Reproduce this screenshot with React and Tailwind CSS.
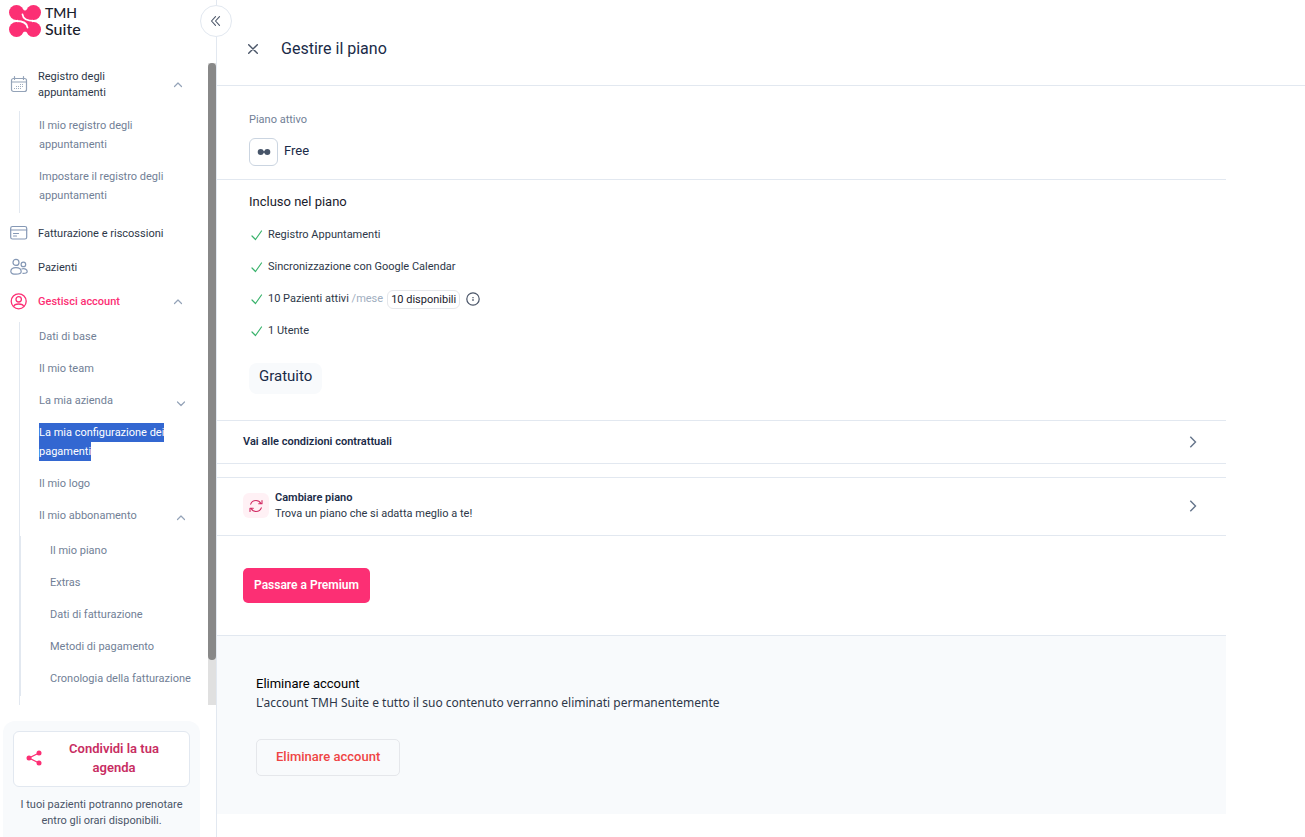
import React, { useState } from "react";

const billingItems = [
  "Il mio piano",
  "Extras",
  "Dati di fatturazione",
  "Metodi di pagamento",
  "Cronologia della fatturazione",
];

const Chevron = ({ className, d = "M1.500 5.500 5 2 8.500 5.500" }) => (
  <svg
    viewBox="0 0 10 7"
    className={`w-[10px] h-[7px] shrink-0 ${className}`}
    fill="none"
    stroke="currentColor"
    strokeWidth="1.2"
    strokeLinecap="round"
    strokeLinejoin="round">
    <path d={d} />
  </svg>
);

const Logo = () => (
  <svg viewBox="0 0 32 32" className="w-8 h-8 shrink-0" fill="#fc2f74">
    <circle cx="7.5" cy="7.5" r="7.5" />
    <circle cx="24.5" cy="7.5" r="7.5" />
    <circle cx="7.5" cy="24.5" r="7.5" />
    <circle cx="24.5" cy="24.5" r="7.5" />
    <path d="M12 3.500C14 6 18 6 20 3.500L26 13C24 16 24 16 26 19L20 28.500C18 26 14 26 12 28.500L6 19C8 16 8 16 6 13Z" />
    <path
      d="M13.500 9.500C14 13.500 18 16 25 16M7 16C14 16 18 18 18.500 22.500"
      fill="none"
      stroke="#fff"
      strokeWidth="1.800"
      strokeLinecap="round"
    />
    <path d="M0 14.800Q5 16 9 14.800V17.200Q5 16 0 17.200ZM32 14.800Q27 16 23 14.800V17.200Q27 16 32 17.200Z" fill="#fff" />
  </svg>
);

const CalendarIcon = () => (
  <svg
    viewBox="0 0 18 18"
    className="w-[18px] h-[18px] shrink-0 text-[#94a3b8]"
    fill="none"
    stroke="currentColor"
    strokeWidth="1.200"
    strokeLinecap="round">
    <rect x="1.500" y="3.500" width="15" height="13" rx="2" />
    <path d="M1.500 7h15M4.500 1.500v3M13.500 1.500v3" />
    <path
      d="M4.500 13.500h.1M6.500 13.500h.1M8.500 13.500h.1M10.500 13.500h.1M6.500 11.500h.1M8.500 11.500h.1M10.500 11.500h.1M12.500 11.500h.1M10.500 9.500h.1M12.500 9.500h.1"
      strokeWidth="1"
    />
  </svg>
);

const CardIcon = () => (
  <svg
    viewBox="0 0 18 18"
    className="w-[18px] h-[18px] shrink-0 text-[#8598b5]"
    fill="none"
    stroke="currentColor"
    strokeWidth="1.200"
    strokeLinecap="round">
    <rect x=".7" y="2.500" width="16" height="12.500" rx="1.800" />
    <path d="M.7 6h16M3.500 9.500h5M3.500 12h3" />
  </svg>
);

const PatientsIcon = () => (
  <svg
    viewBox="0 0 18 18"
    className="w-[18px] h-[18px] shrink-0 text-[#8598b5]"
    fill="none"
    stroke="currentColor"
    strokeWidth="1.200">
    <circle cx="6" cy="4.400" r="3" />
    <path d="M.8 13.600c0-2.600 2.200-4 5.200-4s5.200 1.400 5.200 4c0 1.900-2 2.600-5.200 2.600S.8 15.500.8 13.600Z" />
    <circle cx="13.400" cy="6.400" r="2.300" />
    <path d="M11.500 11c3.200-1 5.700.4 5.700 2.500 0 1.300-1.500 2-4.700 1.900" />
  </svg>
);

const AccountIcon = () => (
  <svg
    viewBox="0 0 18 18"
    className="w-[18px] h-[18px] shrink-0 text-[#fc2f74]"
    fill="none"
    stroke="currentColor"
    strokeWidth="1.300">
    <circle cx="8.700" cy="9.300" r="7.500" />
    <circle cx="8.700" cy="7.300" r="2.700" />
    <path d="M3.700 14.700c.4-2 2.500-2.700 5-2.700s4.600.7 5 2.700" />
  </svg>
);

const ShareIcon = () => (
  <svg viewBox="0 0 16 16" className="w-4 h-4 shrink-0" fill="#fc2f74">
    <path d="M13 3 3 8l10 5" fill="none" stroke="#fc2f74" strokeWidth="1.300" />
    <circle cx="3" cy="8" r="2.500" />
    <circle cx="13" cy="3" r="2.500" />
    <circle cx="13" cy="13" r="2.500" />
  </svg>
);

const RefreshIcon = () => (
  <svg
    viewBox="0 0 14 14"
    className="w-[14px] h-[14px] text-[#d12a63]"
    fill="none"
    stroke="currentColor"
    strokeWidth="1.100"
    strokeLinecap="round"
    strokeLinejoin="round">
    <path d="M1.700 5.200C2.500 2.800 4.600 1.500 7 1.500c2.100 0 3.900 1.100 4.900 2.900M13 1.500v3.300H9.700" />
    <path d="M12.300 8.800c-.8 2.400-2.900 3.700-5.300 3.700-2.100 0-3.900-1.100-4.900-2.900M1 12.500V9.200h3.300" />
  </svg>
);

const CheckIcon = () => (
  <svg
    viewBox="0 0 12 12"
    className="w-3 h-3 shrink-0 text-[#38b26b]"
    fill="none"
    stroke="currentColor"
    strokeWidth="1.200"
    strokeLinecap="round"
    strokeLinejoin="round">
    <path d="m1 7 3.500 3.500L10.500 2" />
  </svg>
);

const SubLink = ({ children }) => (
  <a href="#" className="block w-[136px] text-[11px] leading-[19px] text-[#718096]">
    {children}
  </a>
);

// Voce di primo livello del menu laterale
const NavRow = ({ icon, label, active, chevron }) => (
  <a href="#" className="flex items-center min-h-[34px] pl-[10px] pr-[25px]">
    {icon}
    <span
      className={`ml-[10px] pt-0.5 w-32 text-[11px] leading-4 ${
        active ? "text-[#fc2f74] font-medium" : "text-[#2d3748]"
      }`}>
      {label}
    </span>
    {chevron && <Chevron className="ml-auto text-[#94a3b8]" />}
  </a>
);

const Feature = ({ children }) => (
  <li className="flex items-center h-8 pl-[2px] text-[11px] text-[#2d3748]">
    <CheckIcon />
    <span className="ml-[5px]">{children}</span>
  </li>
);

const Sidebar = ({ onToggle }) => {
  return (
    <aside className="relative flex flex-col w-[217px] shrink-0 h-screen border-r border-[#e2e8f0]">
      <div className="flex h-[63px] shrink-0 pt-[5px] pl-[9px]">
        <Logo />
        <div className="ml-1 font-['Lato'] font-medium text-[#1a202c] leading-4">
          <div className="text-sm leading-4">TMH</div>
          <div className="text-base leading-4">Suite</div>
        </div>
      </div>

      <button
        type="button"
        aria-label="Comprimi menu"
        onClick={onToggle}
        className="absolute top-[5px] -right-4 w-8 h-8 flex items-center justify-center rounded-full border border-[#e2e8f0] bg-white text-[#4a5568]">
        <svg
          viewBox="0 0 10 10"
          className="w-[10px] h-[10px]"
          fill="none"
          stroke="currentColor"
          strokeWidth="1.100"
          strokeLinecap="round"
          strokeLinejoin="round">
          <path d="M4.500.7.500 5l4 4.300M8.500.7 4.500 5l4 4.300" />
        </svg>
      </button>

      <div className="flex flex-1 min-h-0">
        <nav className="flex-1 min-w-0 overflow-hidden pt-1">
          <NavRow icon={<CalendarIcon />} label="Registro degli appuntamenti" chevron />
          <div className="ml-[19px] mt-[10px] border-l border-[#e2e8f0] pl-[19px] pt-[5px] pb-2 flex flex-col gap-[13px]">
            <SubLink>Il mio registro degli appuntamenti</SubLink>
            <SubLink>Impostare il registro degli appuntamenti</SubLink>
          </div>

          <div className="mt-[3px]">
            <NavRow icon={<CardIcon />} label="Fatturazione e riscossioni" />
            <NavRow icon={<PatientsIcon />} label="Pazienti" />
            <NavRow icon={<AccountIcon />} label="Gestisci account" active chevron />
          </div>
          <div className="ml-[19px] mt-1 border-l border-[#e2e8f0] pt-[5px] pb-5">
            <div className="pl-[19px] flex flex-col gap-[13px]">
              <SubLink>Dati di base</SubLink>
              <SubLink>Il mio team</SubLink>
              <div className="flex items-center justify-between pr-[22px]">
                <SubLink>La mia azienda</SubLink>
                <Chevron className="mt-[6px] text-[#94a3b8]" d="M1.500 2 5 5.500 8.500 2" />
              </div>
              <a href="#" className="block w-[136px] text-[11px] leading-[19px] text-white">
                <span className="bg-[#3367d1] py-[3px]">
                  La mia configurazione dei pagamenti
                </span>
              </a>
              <SubLink>Il mio logo</SubLink>
              <div className="flex items-center justify-between pr-[22px]">
                <SubLink>Il mio abbonamento</SubLink>
                <Chevron className="mt-1 text-[#94a3b8]" />
              </div>
            </div>
            <div className="mt-[11px] border-l border-[#e2e8f0] pl-[29px] pt-[5px] pb-2 flex flex-col gap-[13px]">
              {billingItems.map((item) => (
                <a
                  key={item}
                  href="#"
                  className="text-[11px] leading-[19px] text-[#718096] whitespace-nowrap">
                  {item}
                </a>
              ))}
            </div>
          </div>
        </nav>
        <div className="w-2 bg-[#e0e0e0]">
          <div className="h-[93%] rounded-full bg-[#888888]"></div>
        </div>
      </div>

      <div className="shrink-0 mt-4 ml-[3px] mr-4 rounded-t-xl bg-[#f8fafc] px-[10px] pt-[10px] pb-2">
        <button
          type="button"
          className="flex items-center w-full h-14 pl-3 pb-0.5 rounded-md border border-[#e2e8f0] bg-white">
          <ShareIcon />
          <span className="w-[100px] ml-[22px] text-[13px] leading-[19px] font-semibold text-[#c82d62]">
            Condividi la tua agenda
          </span>
        </button>
        <p className="mt-[10px] text-center text-[11px] leading-4 text-[#4a5568]">
          I tuoi pazienti potranno prenotare entro gli orari disponibili.
        </p>
      </div>
    </aside>
  );
};

const App = () => {
  const [open, setOpen] = useState(true);

  return (
    <div className="flex min-h-screen bg-white font-['Roboto',sans-serif]">
      {open && <Sidebar onToggle={() => setOpen(false)} />}

      <main className="flex-1 min-w-0">
        <header className="flex items-center h-[86px] pt-3 pl-[31px] border-b border-[#e2e8f0]">
          <button type="button" aria-label="Chiudi" className="text-[#4a5568]">
            <svg
              viewBox="0 0 10 10"
              className="w-[10px] h-[10px]"
              stroke="currentColor"
              strokeWidth="1.400"
              strokeLinecap="round">
              <path d="m.700.700 8.600 8.600M9.300.700.700 9.300" />
            </svg>
          </button>
          <h1 className="ml-[23px] text-base leading-5 text-[#1a2b48]">Gestire il piano</h1>
        </header>

        <div className="pr-[79px]">
          <section className="pl-8 pt-6 pb-[13px] border-b border-[#e2e8f0]">
            <p className="text-[11px] leading-5 text-[#718096]">Piano attivo</p>
            <div className="flex items-center mt-2">
              <div className="flex items-center justify-center w-[29px] h-7 rounded-md border border-[#cbd5e1]">
                <svg viewBox="0 0 14 8" className="w-[14px] h-2" fill="#475569">
                  <circle cx="3.700" cy="4" r="3" />
                  <circle cx="10.300" cy="4" r="3" />
                  <rect x="3" y="3.200" width="8" height="1.600" />
                </svg>
              </div>
              <span className="ml-[6px] pb-0.5 text-[13px] leading-5 text-[#1a2b48]">Free</span>
            </div>
          </section>

          <section className="pl-8 pt-3 pb-[26px]">
            <h2 className="text-[13px] leading-5 text-[#1a202c]">Incluso nel piano</h2>
            <ul className="mt-[7px]">
              <Feature>Registro Appuntamenti</Feature>
              <Feature>Sincronizzazione con Google Calendar</Feature>
              <Feature>
                <span className="flex items-center">
                  10 Pazienti attivi&nbsp;<span className="text-[#a0aec0]">/mese</span>
                  <span className="ml-1 px-[3px] h-[19px] leading-[17px] rounded-md border border-[#e5e7eb] text-[#1a202c]">
                    10 disponibili
                  </span>
                  <svg
                    viewBox="0 0 14 14"
                    className="ml-[6px] w-[14px] h-[14px]"
                    fill="none"
                    stroke="#4a5568"
                    strokeWidth="1.200">
                    <circle cx="7" cy="7" r="6.200" />
                    <path d="M7 6.700v2.300M7 5v1" />
                  </svg>
                </span>
              </Feature>
              <Feature>1 Utente</Feature>
            </ul>
            <div className="inline-block mt-4 px-[10px] pt-[3px] h-[31px] rounded-lg bg-[#f8fafc] text-[15px] leading-5 text-[#1a2b48]">
              Gratuito
            </div>
          </section>

          <a
            href="#"
            className="flex items-center justify-between h-11 pl-[26px] pr-[29px] border-y border-[#e2e8f0]">
            <span className="text-[11px] leading-4 font-semibold text-[#1a2b48]">
              Vai alle condizioni contrattuali
            </span>
            <svg
              viewBox="0 0 8 12"
              className="w-2 h-3"
              fill="none"
              stroke="#64748b"
              strokeWidth="1.400">
              <path d="m1.300.700 5.200 5.300-5.200 5.300" />
            </svg>
          </a>

          <a
            href="#"
            className="flex items-center mt-[13px] h-[59px] pb-0.5 pl-[26px] pr-[29px] border-y border-[#e2e8f0]">
            <span className="flex items-center justify-center w-[26px] h-[25px] rounded-md bg-[#fff1f5]">
              <RefreshIcon />
            </span>
            <span className="ml-[6px] text-[11px] leading-4">
              <span className="block font-semibold text-[#1a2b48]">Cambiare piano</span>
              <span className="block text-[#2d3748]">Trova un piano che si adatta meglio a te!</span>
            </span>
            <svg
              viewBox="0 0 8 12"
              className="ml-auto w-2 h-3"
              fill="none"
              stroke="#64748b"
              strokeWidth="1.400">
              <path d="m1.300.700 5.200 5.300-5.200 5.300" />
            </svg>
          </a>

          <div className="pl-[26px] py-8">
            <button
              type="button"
              className="block h-[35px] px-[11px] pb-0.5 rounded-[5px] bg-[#fc2f74] text-xs font-semibold text-white">
              Passare a Premium
            </button>
          </div>

          <section className="border-t border-[#e2e8f0] bg-[#f8fafc] pl-[39px] pt-[38px] pb-[38px]">
            <h2 className="text-[13px] leading-[19px] text-black">Eliminare account</h2>
            <p className="font-['Noto_Sans'] text-xs leading-[19px] text-[#2d3748]">
              L'account TMH Suite e tutto il suo contenuto verranno eliminati permanentemente
            </p>
            <button
              type="button"
              className="block mt-[27px] h-[37px] px-[19px] pb-0.5 rounded-[5px] border border-[#e5e7eb] text-[13px] font-medium text-[#ef4444]">
              Eliminare account
            </button>
          </section>
        </div>
      </main>
    </div>
  );
};

export default App;
